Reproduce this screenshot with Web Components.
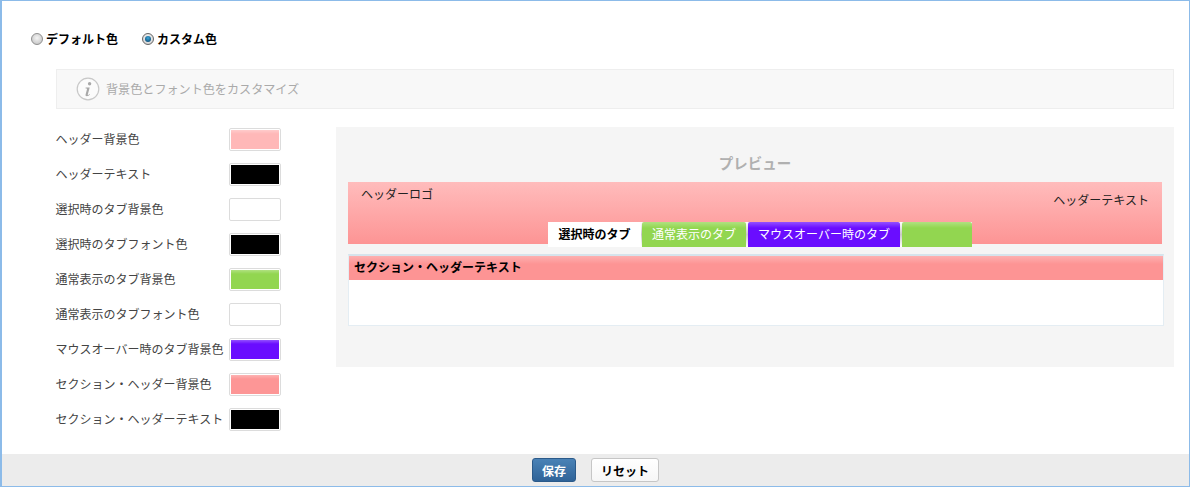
<!DOCTYPE html>
<html lang="ja">
<head>
<meta charset="utf-8">
<title>カスタム色</title>
<style>
html, body { margin: 0; height: 100%; }
body { font-family: "Noto Sans CJK JP", "Liberation Sans", sans-serif; background: #fff; }
</style>
</head>
<body>
<theme-settings></theme-settings>
<script>
// gloss = lighter band on top of a colour, as the swatches and tabs have
const gloss = (c, h = 5) => `linear-gradient(rgba(255,255,255,.28), rgba(255,255,255,0) ${h}px), ${c}`;

class RadioOption extends HTMLElement {
    constructor() {
        super();
        this.attachShadow({ mode: "open" });
        const on = this.hasAttribute("checked");
        this.shadowRoot.innerHTML = `
            <style>
                :host { display: inline-flex; align-items: center; gap: 3px; font-size: 12px; font-weight: 700; color: #000; line-height: 18px; }
                .dot { width: 12px; height: 12px; border-radius: 50%; border: 1px solid #8f8f8f; box-sizing: border-box;
                       background: radial-gradient(circle at 50% 40%, #f4f4f4, #bdbdbd); display: flex; align-items: center; justify-content: center; }
                .dot.on { border-color: #666; background: radial-gradient(circle at 50% 40%, #fff, #c4c4c4); }
                .dot.on i { width: 6px; height: 6px; border-radius: 50%; background: radial-gradient(circle at 50% 35%, #3fa7d8, #0b4f7c 80%); }
            </style>
            <span class="dot ${on ? "on" : ""}">${on ? "<i></i>" : ""}</span><span><slot></slot></span>
        `;
    }
}
customElements.define("radio-option", RadioOption);

class InfoBox extends HTMLElement {
    constructor() {
        super();
        this.attachShadow({ mode: "open" });
        this.shadowRoot.innerHTML = `
            <style>
                :host { display: flex; align-items: center; gap: 6px; height: 40px; box-sizing: border-box; padding-left: 20px;
                        background: #f8f8f8; border: 1px solid #eeeeee; color: #aaaaaa; font-size: 12.1px; }
                svg { flex: none; margin-left: -1px; }
                span { margin-top: -1px; }
            </style>
            <svg width="24" height="24" viewBox="0 0 24 24">
                <circle cx="12" cy="12" r="10.8" fill="#fbfbfb" stroke="#c8c8c8" stroke-width="1.2"/>
                <circle cx="13.6" cy="6.8" r="1.7" fill="#a8a8a8"/>
                <path d="M9.6 10.6h4.1l-1.9 7c-.1.5.3.6.6.4l1.2-.9.3.4c-1 1.1-2 1.7-3 1.7-1.2 0-1.6-.7-1.3-1.7l1.4-5.2c.1-.5-.1-.7-.5-.7h-.9z" fill="#a8a8a8"/>
            </svg>
            <span><slot></slot></span>
        `;
    }
}
customElements.define("info-box", InfoBox);

class ColorRow extends HTMLElement {
    constructor() {
        super();
        this.attachShadow({ mode: "open" });
        const color = this.getAttribute("color");
        const fill = color === "#000" || color === "#fff" ? color : gloss(color, 4);
        this.shadowRoot.innerHTML = `
            <style>
                :host { display: flex; align-items: center; justify-content: space-between; height: 23px; font-size: 12px; color: #444; white-space: nowrap; }
                .label { margin-top: -2px; margin-left: -0.5px; }
                .swatch { width: 52px; height: 23px; box-sizing: border-box; border: 1px solid #dcdcdc; border-radius: 2px; padding: 1px; background: #fff; }
                .swatch b { display: block; height: 100%; background: ${fill}; }
            </style>
            <span class="label"><slot></slot></span>
            <span class="swatch"><b></b></span>
        `;
    }
}
customElements.define("color-row", ColorRow);

class PreviewTab extends HTMLElement {
    constructor() {
        super();
        this.attachShadow({ mode: "open" });
        const color = this.getAttribute("color");
        const ink = this.getAttribute("ink") || "#fff";
        const width = this.getAttribute("width");
        this.shadowRoot.innerHTML = `
            <style>
                :host { display: block; flex: none; width: ${width}px; height: 25px; line-height: 24px; text-align: center; font-size: 12px; color: ${ink};
                        background: ${color === "#fff" ? "#fff" : gloss(color, 6)}; border-radius: 2px 2px 0 0; white-space: nowrap; }
                :host([selected]) { font-weight: 700; }
            </style>
            <slot></slot>
        `;
    }
}
customElements.define("preview-tab", PreviewTab);

class PreviewPanel extends HTMLElement {
    constructor() {
        super();
        this.attachShadow({ mode: "open" });
        this.shadowRoot.innerHTML = `
            <style>
                :host { display: block; width: 838px; height: 240px; box-sizing: border-box; background: #f5f5f5; padding: 25px 10px 0 12px; }
                h3 { margin: 0; height: 30px; line-height: 22px; padding-right: 2px; text-align: center; font-size: 14.5px; font-weight: 700; color: #b0b0b0; }
                .head { height: 62px; width: 814px; background: linear-gradient(#ffbcbc, #fd9494); display: flex; flex-direction: column; color: #222; font-size: 12px; }
                .top { flex: none; box-sizing: border-box; display: flex; justify-content: space-between; padding: 3px 13px 0 13px; height: 40px; }
                .top span:last-child { padding-top: 6px; }
                .tabs { flex: none; align-self: flex-start; display: flex; margin-left: 200px; height: 25px;
                        background: linear-gradient(#fff, #c8c8c8 50%, #fff); }
                .tabs preview-tab + preview-tab { margin-left: 2px; }
                .tabs preview-tab:nth-child(2) { margin-left: 1px; }
                .section { margin-top: 10px; height: 72px; box-sizing: border-box; border: 1px solid #e4edf3; border-top: 2px solid #d6e4ec; background: #fff; }
                .section div { height: 24px; line-height: 22px; padding-left: 5px; font-size: 12px; font-weight: 700; color: #000;
                               background: linear-gradient(#fdb0b0, #fd9494 8px); }
            </style>
            <h3>プレビュー</h3>
            <div class="head">
                <div class="top"><span>ヘッダーロゴ</span><span>ヘッダーテキスト</span></div>
                <div class="tabs">
                    <preview-tab color="#fff" ink="#000" width="93" selected>選択時のタブ</preview-tab>
                    <preview-tab color="#92d650" width="104">通常表示のタブ</preview-tab>
                    <preview-tab color="#6a0dff" width="152">マウスオーバー時のタブ</preview-tab>
                    <preview-tab color="#92d650" width="70"></preview-tab>
                </div>
            </div>
            <div class="section"><div>セクション・ヘッダーテキスト</div></div>
        `;
    }
}
customElements.define("preview-panel", PreviewPanel);

class ThemeSettings extends HTMLElement {
    constructor() {
        super();
        this.attachShadow({ mode: "open" });
        const rows = [
            ["ヘッダー背景色", "#ffb8b8"],
            ["ヘッダーテキスト", "#000"],
            ["選択時のタブ背景色", "#fff"],
            ["選択時のタブフォント色", "#000"],
            ["通常表示のタブ背景色", "#92d650"],
            ["通常表示のタブフォント色", "#fff"],
            ["マウスオーバー時のタブ背景色", "#6a0dff"],
            ["セクション・ヘッダー背景色", "#fd9696"],
            ["セクション・ヘッダーテキスト", "#000"],
        ];
        this.shadowRoot.innerHTML = `
            <style>
                :host { display: flex; flex-direction: column; height: 487px; box-sizing: border-box; border: 1px solid #8cbbe9; border-left-width: 2px; color: #333; }
                .main { flex: 1; padding: 29px 15px 0 29px; }
                .radios { display: flex; gap: 24px; height: 18px; }
                info-box { margin: 21px 0 18px 25px; }
                .cols { display: flex; margin-left: 25px; }
                .rows { width: 225px; margin-right: 55px; display: flex; flex-direction: column; gap: 12px; padding-top: 1px; }
                .foot { height: 32px; background: #ececec; display: flex; justify-content: center; align-items: center; gap: 15px; }
                button { font: 700 12px "Noto Sans CJK JP", "Liberation Sans", sans-serif; height: 24px; padding: 0; border-radius: 3px; cursor: pointer; }
                .save { width: 44px; color: #fff; background: linear-gradient(#4a82b6, #2f6398); border: 1px solid #2b5a8a; }
                .reset { width: 68px; color: #000; background: linear-gradient(#fff, #f6f6f6); border: 1px solid #c6c6c6; }
            </style>
            <div class="main">
                <div class="radios">
                    <radio-option>デフォルト色</radio-option>
                    <radio-option checked>カスタム色</radio-option>
                </div>
                <info-box>背景色とフォント色をカスタマイズ</info-box>
                <div class="cols">
                    <div class="rows">
                        ${rows.map(([label, color]) => `<color-row color="${color}">${label}</color-row>`).join("")}
                    </div>
                    <preview-panel></preview-panel>
                </div>
            </div>
            <div class="foot">
                <button class="save">保存</button>
                <button class="reset">リセット</button>
            </div>
        `;
    }
}
customElements.define("theme-settings", ThemeSettings);
</script>
</body>
</html>
